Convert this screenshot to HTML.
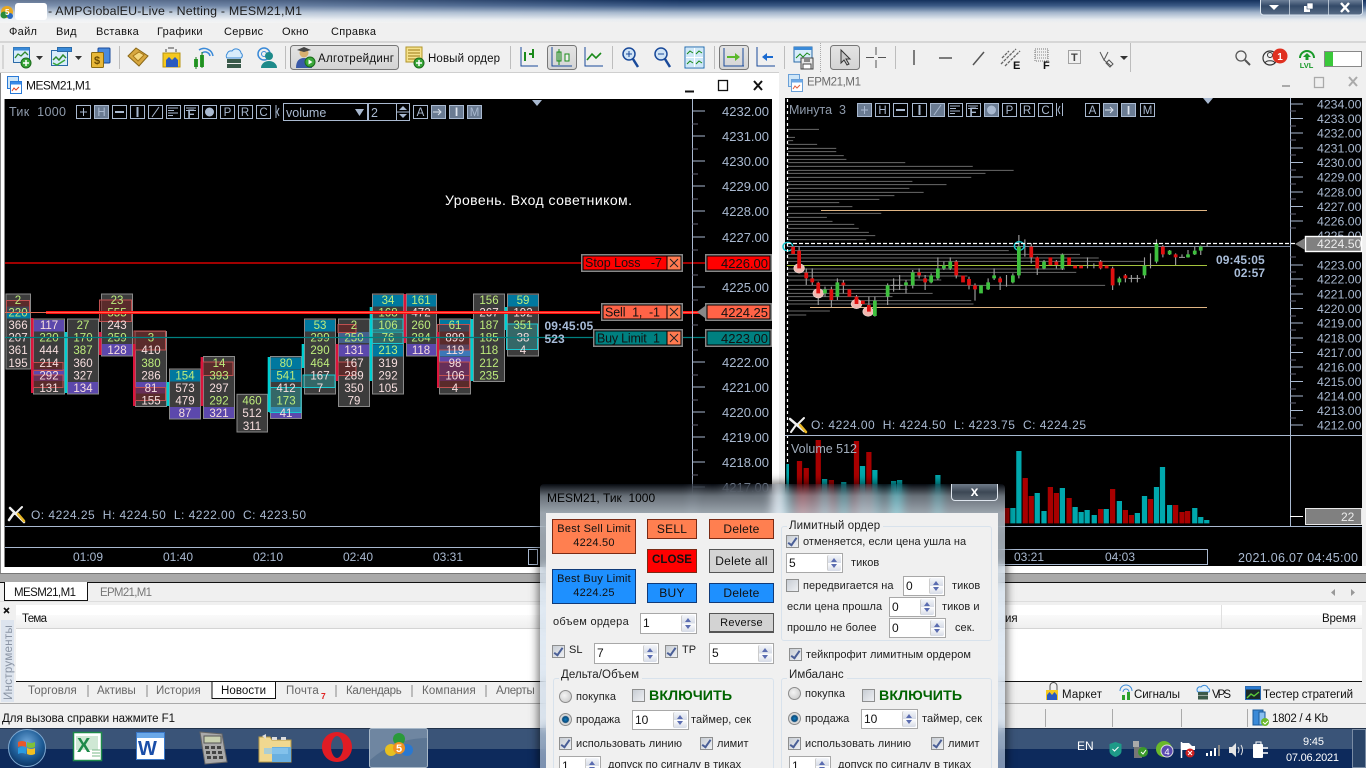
<!DOCTYPE html>
<html lang="ru"><head><meta charset="utf-8"><title>AMPGlobalEU-Live - Netting - MESM21,M1</title>
<style>
html,body{margin:0;padding:0;width:1366px;height:768px;overflow:hidden;background:#f0f0f0}
body{position:relative;font-family:"Liberation Sans","DejaVu Sans",sans-serif;font-size:11px;color:#111}
svg.main{position:absolute;left:0;top:0}
svg text{font-family:"Liberation Sans","DejaVu Sans",sans-serif;white-space:pre}
.m{font-size:11px;fill:#111;letter-spacing:.3px}
.s{font-size:13px;fill:#a9b9d0}
.r{font-size:12.3px;fill:#a9b9d0}
.c{font-size:11.5px;text-anchor:middle}
.g{fill:#bdec7c}.p{fill:#f6dede}
.l{font-size:12px;fill:#a9b9d0}
.bt{font-size:12px;fill:#a9b9d0;text-anchor:middle}
.tab{font-size:11.5px;fill:#666;letter-spacing:.25px}
.dk{font-size:11.5px;fill:#111}
.tray{font-size:12px;fill:#fff}
#dlg{position:absolute;left:540px;top:484px;width:465px;height:284px;backdrop-filter:blur(5px);-webkit-backdrop-filter:blur(5px);background:linear-gradient(180deg,rgba(20,30,50,.3) 0,rgba(190,205,220,.55) 12px,rgba(215,228,240,.72) 29px,rgba(200,215,232,.6) 100%);box-shadow:0 0 9px 2px rgba(0,0,0,.55);border-radius:4px 4px 0 0}
#cl{position:absolute;left:6px;top:29px;width:452px;height:255px;background:#f0f0f0}
#dlg .a{position:absolute;white-space:pre}
.ttl{left:7px;top:7px;font-size:12px;line-height:15px;color:#000}
.x{left:411px;top:0;width:45px;height:16px;border:1px solid #dfe6ee;border-top:none;border-radius:0 0 4px 4px;background:linear-gradient(180deg,rgba(136,150,166,.8),rgba(58,70,84,.85) 50%,rgba(85,96,108,.8));color:#fff;font:bold 14px/15px "Liberation Sans",sans-serif;text-align:center}
.btn{position:absolute;box-sizing:border-box;border:1px solid #7a2a14;text-align:center;font-size:12px;line-height:18px;letter-spacing:.25px;color:#111}
.or{background:#ff7f50}.bl{background:#1e90ff;border-color:#103a78}.gr{background:#d3d3d3;border-color:#555}
.bg2{font-size:11px;line-height:13.5px;padding-top:3px}
.t{position:absolute;white-space:nowrap;font-size:11px;line-height:14px;letter-spacing:.05px;color:#222}
.in{position:absolute;box-sizing:border-box;border:1px solid #a8a8a8;background:#fff;font-size:12px;line-height:18px;padding-left:2px;color:#111}
.sp{position:absolute;right:1px;top:1px;bottom:1px;width:13px;background:linear-gradient(180deg,#f4f6fa 0,#d6dbe6 49%,#fff 50%,#d6dbe6 100%);border-left:1px solid #ccc;border-radius:2px}
.sp:before,.sp:after{content:"";position:absolute;left:3px;border-left:3.5px solid transparent;border-right:3.5px solid transparent}
.sp:before{top:3px;border-bottom:4px solid #5a6cb0}.sp:after{bottom:3px;border-top:4px solid #5a6cb0}
.cb{position:absolute;box-sizing:border-box;width:13px;height:13px;border:1px solid #8e8f8f;background:linear-gradient(135deg,#c8cdd4,#eef0f3)}
.ck:after{content:"";position:absolute;left:3px;top:0;width:3px;height:8px;border-right:2px solid #4a5f97;border-bottom:2px solid #4a5f97;transform:rotate(35deg)}
.ra{position:absolute;box-sizing:border-box;width:13px;height:13px;border-radius:50%;border:1px solid #8b8b8b;background:radial-gradient(circle at 40% 40%,#f4f4f4,#c4c4c4)}
.on{background:radial-gradient(circle,#0f7cc0 0,#0a4a7a 3px,#d8d8d8 4px)}
.fs{position:absolute;box-sizing:border-box;border:1px solid #d8e2ec;border-radius:3px}
.lg{position:absolute;background:#f0f0f0;padding:0 3px 0 2px;font-size:11.5px;line-height:14px;letter-spacing:.1px;color:#222}
.on2{position:absolute;font-weight:bold;font-size:14.2px;line-height:16px;color:#006400;letter-spacing:.1px}
</style></head><body>
<svg class="main" width="1366" height="768" viewBox="0 0 1366 768" xmlns="http://www.w3.org/2000/svg">
<defs>
<linearGradient id="tb" x1="0" y1="0" x2="0" y2="1"><stop offset="0" stop-color="#14305c"/><stop offset=".25" stop-color="#3c5a86"/><stop offset=".55" stop-color="#a4b6cc"/><stop offset=".85" stop-color="#e6ebf0"/><stop offset="1" stop-color="#f0f0f0"/></linearGradient>
<linearGradient id="tb2" x1="0" y1="0" x2="1" y2="0"><stop offset="0" stop-color="#fff" stop-opacity=".35"/><stop offset=".18" stop-color="#fff" stop-opacity=".25"/><stop offset=".5" stop-color="#fff" stop-opacity="0"/></linearGradient>
<linearGradient id="act" x1="0" y1="0" x2="0" y2="1"><stop offset="0" stop-color="#e4e4e4"/><stop offset="1" stop-color="#d4d4d4"/></linearGradient>
<linearGradient id="hd" x1="0" y1="0" x2="0" y2="1"><stop offset="0" stop-color="#fafafa"/><stop offset="1" stop-color="#eeeeee"/></linearGradient>
<linearGradient id="wctl" x1="0" y1="0" x2="0" y2="1"><stop offset="0" stop-color="#8a9ab0"/><stop offset=".5" stop-color="#334a68"/><stop offset="1" stop-color="#5a6e88"/></linearGradient>
<radialGradient id="orb" cx=".5" cy=".35" r=".7"><stop offset="0" stop-color="#6ea6d8"/><stop offset=".6" stop-color="#1c5a94"/><stop offset="1" stop-color="#0a2c58"/></radialGradient>
</defs>
<!-- title bar -->
<rect width="1366" height="23" fill="url(#tb)"/><rect width="1366" height="23" fill="url(#tb2)"/>
<circle cx="7" cy="12" r="6" fill="#e8a820"/><circle cx="4" cy="15" r="3.5" fill="#2a8a3a"/><circle cx="10" cy="16" r="3" fill="#2a6ac0"/><text x="5" y="15" font-size="8" fill="#fff" font-weight="bold">5</text>
<rect x="15" y="3" width="32" height="17" rx="3" fill="#fff"/>
<text x="48" y="15" font-size="12.4" fill="#1c1c1c" textLength="254">- AMPGlobalEU-Live - Netting - MESM21,M1</text>
<g transform="translate(1260,0)"><rect x=".5" y="-3" width="102" height="18" rx="3" fill="url(#wctl)" stroke="#dce6f0"/><path d="M29.5 0V15M68.5 0V15" stroke="#dce6f0" stroke-width=".7"/>
<path d="M9 5h10l-5 5z" fill="#fff"/><rect x="44" y="6" width="6" height="6" fill="#fff"/><rect x="47" y="3" width="6" height="6" fill="#fff" stroke="#334a68" stroke-width=".6"/><path d="M81 3l8 9M89 3l-8 9" stroke="#fff" stroke-width="2.4"/></g>
<!-- menu -->
<rect y="23" width="1366" height="19" fill="#f0f0f0"/>
<text class="m" x="9" y="35">Файл</text><text class="m" x="56" y="35">Вид</text><text class="m" x="96" y="35">Вставка</text><text class="m" x="157" y="35">Графики</text><text class="m" x="224" y="35">Сервис</text><text class="m" x="282" y="35">Окно</text><text class="m" x="331" y="35">Справка</text>
<!-- toolbar -->
<rect y="42" width="1366" height="31" fill="#f0f0f0"/>
<path d="M0 42H1366" stroke="#bbb"/><path d="M0 72.5H779" stroke="#cfcfcf"/>
<path d="M3 45V69M119.5 46V69M285.5 46V69M510.5 46V69M612.5 46V69M714.5 46V69M784.5 46V69M895.5 46V69M1130.5 43V72" stroke="#bdbdbd" stroke-width="1"/><path d="M820.5 43V72" stroke="#aaa" stroke-dasharray="1 1"/>
<!-- new chart -->
<g stroke-linejoin="round"><rect x="13.500" y="47.500" width="16" height="15" fill="#d8ecfa" stroke="#2a6aa8"/><rect x="13.500" y="47.500" width="16" height="3" fill="#3a8ad8"/><path d="M15 58l3-4 3 2 4-4 3 3" fill="none" stroke="#2e8a2e" stroke-width="1.300"/><circle cx="26" cy="63" r="5" fill="#3aa83a" stroke="#1a6a1a"/><path d="M26 60v6M23 63h6" stroke="#fff" stroke-width="1.500"/></g>
<path d="M36 56h7l-3.500 4z" fill="#333"/>
<rect x="51.500" y="50.500" width="16" height="15" fill="#d8ecfa" stroke="#2a6aa8"/><rect x="57.500" y="47.500" width="14" height="4" fill="#3a8ad8" stroke="#2a6aa8"/><path d="M53 60l3-3 3 3 4-5 3 3" fill="none" stroke="#2e8a2e" stroke-width="1.500"/><path d="M53 63l4 2 8-5" fill="none" stroke="#3aa83a" stroke-width="1.500"/>
<path d="M75 56h7l-3.500 4z" fill="#333"/>
<rect x="98" y="48" width="12" height="15" rx="1" fill="#4a8adc" stroke="#1a4a9a"/><rect x="91.500" y="52.500" width="12" height="15" rx="1" fill="#e8b838" stroke="#8a6a10"/><text x="94" y="64" font-size="11" font-weight="bold" fill="#6a4a00">$</text>
<path d="M128 56l8-8 12 8-9 10z" fill="#d8a840" stroke="#8a6818"/><path d="M133 56l6-4 5 3-6 6z" fill="#f4d880" stroke="#a87818"/>
<path d="M166 49v3M176 49v3M168 48h6" stroke="#444" fill="none"/><rect x="163" y="53" width="17" height="14" fill="#f4c820" stroke="#b89410"/><path d="M166 67v-7l3-3 3 3 3-3 3 3v7z" fill="#2a5ac0"/>
<path d="M199 50a9 9 0 0 1 14 6M202 53a5 5 0 0 1 8 3" fill="none" stroke="#3a8ad8" stroke-width="1.500"/><rect x="194" y="59" width="4" height="8" fill="#2ca02c"/><rect x="200" y="55" width="4" height="12" fill="#2ca02c"/><path d="M196 57v12M202 52v16" stroke="#1a7a1a"/>
<path d="M227 54a4 4 0 0 1 5-3a5 5 0 0 1 9 2a3 3 0 0 1 0 5h-14a3 3 0 0 1 0-4z" fill="#d8ecfa" stroke="#3a8ad8"/><rect x="227" y="59" width="14" height="4" fill="#3a5a4a"/><rect x="227" y="64" width="14" height="4" fill="#3a5a4a"/>
<circle cx="264" cy="54" r="6" fill="none" stroke="#3a8ad8" stroke-width="1.500"/><circle cx="264" cy="54" r="2.500" fill="none" stroke="#3a8ad8"/><circle cx="269" cy="56" r="4" fill="#1e8a8a"/><path d="M261 68a8 7 0 0 1 16 0z" fill="#1e8a8a"/>
<!-- algotrading -->
<rect x="290.500" y="45.500" width="108" height="24" rx="3" fill="url(#act)" stroke="#777"/>
<circle cx="304" cy="53" r="4.500" fill="#d8b070"/><path d="M297 50l7-3 7 3-7 2z" fill="#444"/><path d="M296 68c0-7 3-10 8-10s8 3 8 10z" fill="#3a5aa8"/><circle cx="310" cy="62" r="5" fill="#3aa83a" stroke="#1a6a1a"/><path d="M308.500 59.500v5l4-2.500z" fill="#fff"/>
<text x="318" y="62" font-size="11.500" fill="#111" textLength="76">Алготрейдинг</text>
<rect x="406" y="47" width="16" height="15" fill="#f6e28c" stroke="#b09428"/><path d="M408 50h12M408 53h12M408 56h12M408 59h8" stroke="#9a7a18"/><circle cx="419" cy="63" r="5" fill="#3aa83a" stroke="#1a6a1a"/><path d="M419 60v6M416 63h6" stroke="#fff" stroke-width="1.500"/>
<text x="428" y="62" font-size="11.500" fill="#111" textLength="72">Новый ордер</text>
<!-- chart type -->
<g fill="none" stroke="#1a4a9a"><path d="M521 47v19h17"/><path d="M525 52v9" stroke="#1a8a1a" stroke-width="2"/><path d="M533 49v9" stroke="#1a8a1a" stroke-width="2"/><path d="M529 54h4" stroke="#1a8a1a" stroke-width="2"/></g>
<rect x="547.500" y="45.500" width="29" height="24" rx="3" fill="url(#act)" stroke="#777"/><g fill="none" stroke="#1a4a9a"><path d="M552 47v19h20"/></g><rect x="557" y="52" width="4" height="9" fill="none" stroke="#1a8a1a"/><path d="M559 49v16" stroke="#1a8a1a"/><rect x="565" y="54" width="4" height="7" fill="#f0f0f0" stroke="#1a8a1a"/>
<g fill="none"><path d="M585 47v19h18" stroke="#1a4a9a"/><path d="M587 60l5-6 4 4 5-5" stroke="#1a8a1a" stroke-width="1.600"/></g>
<g fill="none"><circle cx="629" cy="54" r="6" fill="#d0e4f6" stroke="#1a4a9a" stroke-width="1.500"/><path d="M633 59l5 8" stroke="#1a4a9a" stroke-width="2.500"/><path d="M626 54h6M629 51v6" stroke="#1a4a9a"/><circle cx="661" cy="54" r="6" fill="#d0e4f6" stroke="#1a4a9a" stroke-width="1.500"/><path d="M665 59l5 8" stroke="#1a4a9a" stroke-width="2.500"/><path d="M658 54h6" stroke="#1a4a9a"/></g>
<g><rect x="685" y="47" width="19" height="21" fill="#fff" stroke="#1a6ab0"/><rect x="686" y="48" width="8" height="9" fill="#cfe8f8"/><rect x="695" y="48" width="8" height="9" fill="#cfe8f8"/><rect x="686" y="58" width="8" height="9" fill="#cfe8f8"/><rect x="695" y="58" width="8" height="9" fill="#cfe8f8"/><path d="M687 54l3-3 3 2M696 54l3-3 3 2M687 64l3-3 3 2M696 64l3-3 3 2" stroke="#1a8a1a" fill="none"/></g>
<rect x="719.500" y="45.500" width="29" height="24" rx="3" fill="url(#act)" stroke="#777"/><path d="M724 48v18h20M743 48v18" stroke="#1a4a9a" fill="none"/><path d="M727 56h8v-3l5 4-5 4v-3h-8z" fill="#5ab82a"/>
<path d="M757 47v19h18" stroke="#1a4a9a" fill="none"/><path d="M773 56h-6v-3l-5 4 5 4v-3h6z" fill="#1a6ad0"/>
<rect x="794" y="47" width="18" height="15" fill="#d8ecfa" stroke="#2a6aa8"/><rect x="794" y="47" width="18" height="3" fill="#3a8ad8"/><path d="M796 58l4-4 3 3 4-4 3 2" stroke="#1a8a1a" fill="none"/><rect x="801" y="58" width="12" height="11" fill="#e8e8e8" stroke="#444"/><rect x="804" y="58" width="6" height="4" fill="#888"/><rect x="803" y="64" width="8" height="5" fill="#fff" stroke="#444"/>
<rect x="830.500" y="45.500" width="29" height="24" rx="3" fill="url(#act)" stroke="#777"/><path d="M841 50l0 13 3-3 3 5 2-1-3-5h4z" fill="#c8c8c8" stroke="#333"/>
<path d="M876 47v8M876 60v8M866 57.500h8M878 57.500h8" stroke="#555" fill="none"/>
<path d="M914 50v15" stroke="#555" stroke-width="1.500"/><path d="M939 58h13" stroke="#555" stroke-width="1.500"/><path d="M973 65l11-13" stroke="#555" stroke-width="1.500"/>
<path d="M1001 64l15-15M1005 66l15-15M1002 58l7-7" stroke="#666" stroke-width="1.300" stroke-dasharray="3 1"/><text x="1013" y="69" font-size="11" font-weight="bold" fill="#111">E</text>
<path d="M1035 49h13v12h-13z" fill="none" stroke="#777" stroke-dasharray="1 1"/><path d="M1035 52h13M1035 55h13M1035 58h13" stroke="#888" stroke-dasharray="1 1"/><text x="1043" y="69" font-size="11" font-weight="bold" fill="#111">F</text>
<rect x="1068.500" y="50.500" width="12" height="13" fill="none" stroke="#555" stroke-dasharray="1 1"/><text x="1071" y="61" font-size="11" font-weight="bold" fill="#444">T</text>
<path d="M1100 52l4 8 4-8M1104 60l7 6M1109 60l4 4-3 3-4-4z" fill="none" stroke="#555"/><path d="M1120 56h8l-4 4z" fill="#333"/>
<circle cx="1241" cy="56" r="5" fill="none" stroke="#555" stroke-width="1.300"/><path d="M1245 60l5 5" stroke="#555" stroke-width="2"/>
<circle cx="1270" cy="58" r="7" fill="#f0f0f0" stroke="#333" stroke-width="1.200"/><circle cx="1270" cy="55" r="2.500" fill="none" stroke="#333"/><path d="M1265 63c1-3 9-3 10 0" stroke="#333" fill="none"/><circle cx="1280" cy="56" r="7.500" fill="#e03020"/><text x="1280" y="60" font-size="10" fill="#fff" text-anchor="middle" font-weight="bold">1</text>
<path d="M1300 58a7 7 0 0 1 14 0" fill="none" stroke="#1a9a2a" stroke-width="2"/><path d="M1307 53l4 4h-2.500v3h-3v-3h-2.500z" fill="#1a9a2a"/><text x="1306.500" y="68" font-size="7.500" fill="#1a9a2a" text-anchor="middle" font-weight="bold">LVL</text>
<rect x="1324.500" y="51.500" width="37" height="15" fill="#fff" stroke="#888"/><rect x="1325" y="52" width="8" height="14" fill="#3ac83a"/>
<!-- left chart window -->
<rect y="73" width="779" height="500" fill="#fff"/>
<path d="M.5 73V573" stroke="#888"/><path d="M4.500 99V567" stroke="#888"/>
<rect x="7.500" y="76.500" width="11" height="12" fill="#cfe6f7" stroke="#2a7ad8"/><rect x="10.500" y="81.500" width="11" height="12" fill="#fff" stroke="#2a7ad8"/><rect x="11" y="82" width="10" height="2.500" fill="#3a8ae8"/><path d="M12 91l2-3 2 2 3-3" stroke="#e04020" fill="none"/>
<text x="26" y="89.500" font-size="12" fill="#111" textLength="65">MESM21,M1</text>
<path d="M685 91.500h9" stroke="#111" stroke-width="2"/><rect x="718.500" y="80.500" width="9" height="10" fill="none" stroke="#111" stroke-width="1.300"/><path d="M754 81l8 9M762 81l-8 9" stroke="#111" stroke-width="2"/>
<rect x="5" y="99" width="767" height="468" fill="#000"/>
<!-- right chart window -->
<rect x="779" y="73" width="587" height="500" fill="#f0f0f0"/>
<rect x="788.500" y="74.500" width="11" height="12" fill="#cfe6f7" stroke="#6aa0d8"/><rect x="791.500" y="79.500" width="11" height="12" fill="#fff" stroke="#6aa0d8"/><rect x="792" y="80" width="10" height="2.500" fill="#6aa8e8"/><path d="M793 89l2-3 2 2 3-3" stroke="#e06040" fill="none"/>
<text x="807" y="85.500" font-size="11.500" fill="#6a6a6a" textLength="54">EPM21,M1</text>
<path d="M1282 86h8" stroke="#aaa" stroke-width="2"/><rect x="1314.500" y="77.500" width="9" height="10" fill="none" stroke="#aaa" stroke-width="1.300"/><path d="M1349 77l8 9M1357 77l-8 9" stroke="#aaa" stroke-width="2"/>
<rect x="785" y="98" width="577" height="468" fill="#000"/>
<rect x="779" y="566" width="587" height="7" fill="#fff"/>
<rect x="0" y="574" width="1366" height="8" fill="#a9a9a9"/><path d="M0 573.500H1366" stroke="#777"/>

<!-- left chart toolbar -->
<text x="9" y="116" font-size="12.5" fill="#8f9bac" textLength="57">Тик  1000</text>
<g fill="none" stroke="#a9b9d0"><rect x="76.500" y="105.500" width="14" height="13"/><path d="M83.500 108v8M80 112h7"/>
<rect x="94.500" y="105.500" width="14" height="13" fill="#6a7b92"/><rect x="112.500" y="105.500" width="14" height="13"/><path d="M115 112h9" stroke-width="2"/><rect x="130.500" y="105.500" width="14" height="13"/><path d="M137.500 107v10" stroke-width="2"/><rect x="148.500" y="105.500" width="14" height="13"/><path d="M152 117l7-10"/><rect x="166.500" y="105.500" width="14" height="13"/><path d="M168 108h10M168 110.500h6M168 113h10M168 115.500h5"/><rect x="184.500" y="105.500" width="14" height="13"/><path d="M186 108h10M186 110.500h10"/><rect x="202.500" y="105.500" width="14" height="13"/><circle cx="209.500" cy="112" r="4" fill="#a9b9d0"/><rect x="220.500" y="105.500" width="14" height="13"/><rect x="238.500" y="105.500" width="14" height="13"/><rect x="256.500" y="105.500" width="14" height="13"/><path d="M276 105v13M279 108l-2 4 2 4"/>
<rect x="283.500" y="103.500" width="84" height="17"/><rect x="368.500" y="103.500" width="41" height="17"/><path d="M396.500 104v16M397 112h12"/><rect x="413.500" y="105.500" width="14" height="13"/><rect x="431.500" y="105.500" width="14" height="13" fill="#6a7b92"/><path d="M433 112h8M438 109l3 3-3 3" stroke="#dde4ee"/><rect x="449.500" y="105.500" width="14" height="13" fill="#6a7b92"/><rect x="467.500" y="105.500" width="14" height="13" fill="#6a7b92"/></g>
<g font-size="11.5" fill="#a9b9d0" text-anchor="middle"><text x="101.500" y="116">H</text><text x="191" y="118" font-weight="bold">F</text><text x="227.500" y="116">P</text><text x="245" y="116">R</text><text x="263.500" y="116">C</text><text x="420.500" y="116">A</text><text x="456.500" y="116" font-size="12" fill="#dde4ee" font-weight="bold">I</text><text x="474.500" y="116">M</text></g>
<text x="286" y="117" font-size="12.5" fill="#a9b9d0">volume</text><path d="M355 109h9l-4.500 7z" fill="#a9b9d0"/><text x="371" y="117" font-size="12.5" fill="#a9b9d0">2</text><path d="M399 110h8l-4-4zM399 114h8l-4 4z" fill="#a9b9d0"/>
<path d="M532 100h10l-5 6z" fill="#a9b9d0"/>
<text x="445" y="205" font-size="14" fill="#fff" textLength="187">Уровень. Вход советником.</text>

<!-- footprint -->
<g fill="#3c3c3c" stroke="#8a8a8a"><rect x="6" y="294" width="24.500" height="75"/><rect x="33.500" y="319" width="31" height="75"/><rect x="67.500" y="319" width="31" height="75"/><rect x="101.500" y="294" width="31" height="62"/><rect x="135.500" y="331.500" width="31" height="75"/><rect x="169.500" y="369" width="31" height="50"/><rect x="203.500" y="356.500" width="31" height="62"/><rect x="237" y="394.300" width="30.500" height="37.700"/><rect x="270.500" y="356.500" width="31" height="62"/><rect x="304.500" y="319" width="31" height="75"/><rect x="338.500" y="319" width="31" height="87.500"/><rect x="372.500" y="294" width="31" height="100"/><rect x="406.500" y="294" width="30" height="62"/><rect x="439.500" y="319" width="31" height="75"/><rect x="473.500" y="294" width="31" height="87.500"/><rect x="507.500" y="294" width="31" height="62"/></g>
<!-- teal cells -->
<g fill="#00789f"><rect x="7" y="306.500" width="23" height="12"/><rect x="170" y="370" width="30" height="11.500"/><rect x="271" y="357.500" width="30" height="12"/><rect x="271" y="370" width="30" height="12"/><rect x="305" y="320" width="30" height="11.500"/><rect x="373" y="295" width="30" height="11.500"/><rect x="373" y="344.500" width="30" height="12"/><rect x="407" y="295" width="29" height="11.500"/><rect x="440" y="320" width="30" height="11.500"/><rect x="508" y="295" width="30" height="11.500"/></g>
<g fill="#5c48ac"><rect x="34" y="320" width="30" height="11.500"/><rect x="34" y="369" width="30" height="12"/><rect x="68" y="382" width="30" height="11.500"/><rect x="102" y="344" width="30" height="11.500"/><rect x="136" y="382" width="30" height="11.500"/><rect x="170" y="407" width="30" height="11.500"/><rect x="204" y="407" width="30" height="11"/><rect x="271" y="407" width="30" height="11"/><rect x="339" y="344.500" width="30" height="12"/><rect x="407" y="344" width="29" height="11.500"/><rect x="440" y="357" width="30" height="12"/><rect x="440" y="369" width="30" height="12"/></g>
<rect x="339" y="332" width="30" height="11" fill="#44608c"/><rect x="440" y="344.500" width="30" height="12" fill="#3c78b8"/><rect x="271" y="407" width="30" height="6" fill="#3c78b8"/>
<!-- imbalance boxes -->
<g fill="#6e1f1f" fill-opacity=".6" stroke="#c05050"><rect x="6.500" y="300.500" width="23" height="12"/><rect x="33" y="362.500" width="30" height="8"/><rect x="33" y="375" width="30" height="12.500"/><rect x="99.500" y="300" width="32" height="21.500"/><rect x="134" y="331" width="31.500" height="19"/><rect x="134" y="387.500" width="31.500" height="13"/><rect x="201" y="362" width="32" height="13.500"/><rect x="338" y="324.500" width="18" height="8"/><rect x="338" y="362" width="18" height="13.500"/><rect x="437.500" y="324.500" width="32" height="25.500"/><rect x="437.500" y="362" width="32" height="13.500"/><rect x="437.500" y="375.500" width="32" height="12"/></g>
<g fill="#2aa8a8" fill-opacity=".42" stroke="#18c8d0"><rect x="270" y="387.500" width="31" height="25"/><rect x="303" y="375" width="32" height="12.500"/><rect x="372" y="319" width="31" height="11"/><rect x="372" y="332" width="31" height="11.500"/><rect x="506.500" y="324" width="31" height="25.500"/></g>
<!-- side bars -->
<g fill="#dc143c"><rect x="31" y="318" width="2.500" height="75"/><rect x="99" y="332" width="2.500" height="23"/><rect x="133" y="344" width="2.500" height="62"/><rect x="200.700" y="357" width="2.500" height="49"/><rect x="335.700" y="344" width="2.500" height="37"/><rect x="403.700" y="294" width="2.500" height="49"/><rect x="437" y="332" width="2" height="55"/></g>
<g fill="#00ced1"><rect x="64.700" y="332" width="2.500" height="61"/><rect x="166.700" y="382" width="2.500" height="24"/><rect x="267.700" y="357" width="2.500" height="55"/><rect x="301.700" y="344" width="2.500" height="24"/><rect x="369.700" y="307" width="2.500" height="74"/><rect x="470.700" y="319" width="2.500" height="62"/><rect x="504.700" y="307" width="2.500" height="23"/></g>
<g class="c">
<g class="g"><text x="18" y="304">2</text><text x="18" y="316.500">220</text><text x="49" y="341.600">220</text><text x="83" y="329">27</text><text x="83" y="341.600">170</text><text x="83" y="354.200">387</text><text x="117" y="304">23</text><text x="117" y="316.500">555</text><text x="117" y="341.600">259</text><text x="151" y="341.600">3</text><text x="151" y="366.800">380</text><text x="185" y="379.400">154</text><text x="219" y="366.800">14</text><text x="219" y="379.400">393</text><text x="219" y="404.600">292</text><text x="252" y="404.600">460</text><text x="286" y="366.800">80</text><text x="286" y="379.400">541</text><text x="286" y="404.600">173</text><text x="320" y="329">53</text><text x="320" y="341.600">299</text><text x="320" y="354.200">290</text><text x="320" y="366.800">464</text><text x="354" y="329">2</text><text x="354" y="341.600">250</text><text x="388" y="304">34</text><text x="388" y="316.500">168</text><text x="388" y="329">106</text><text x="388" y="341.600">76</text><text x="388" y="354.200">213</text><text x="421" y="304">161</text><text x="421" y="329">260</text><text x="421" y="341.600">284</text><text x="455" y="329">61</text><text x="489" y="304">156</text><text x="489" y="329">187</text><text x="489" y="341.600">185</text><text x="489" y="354.200">118</text><text x="489" y="366.800">212</text><text x="489" y="379.400">235</text><text x="523" y="304">59</text><text x="523" y="329">351</text></g>
<g class="p"><text x="18" y="329">366</text><text x="18" y="341.600">207</text><text x="18" y="354.200">361</text><text x="18" y="366.800">195</text><text x="49" y="329">117</text><text x="49" y="354.200">444</text><text x="49" y="366.800">214</text><text x="49" y="379.400">292</text><text x="49" y="392">131</text><text x="83" y="366.800">360</text><text x="83" y="379.400">327</text><text x="83" y="392">134</text><text x="117" y="329">243</text><text x="117" y="354.200">128</text><text x="151" y="354.200">410</text><text x="151" y="379.400">286</text><text x="151" y="392">81</text><text x="151" y="404.600">155</text><text x="185" y="392">573</text><text x="185" y="404.600">479</text><text x="185" y="417.200">87</text><text x="219" y="392">297</text><text x="219" y="417.200">321</text><text x="252" y="417.200">512</text><text x="252" y="429.800">311</text><text x="286" y="392">412</text><text x="286" y="417.200">41</text><text x="320" y="379.400">167</text><text x="320" y="392">7</text><text x="354" y="354.200">131</text><text x="354" y="366.800">167</text><text x="354" y="379.400">289</text><text x="354" y="392">350</text><text x="354" y="404.600">79</text><text x="388" y="366.800">319</text><text x="388" y="379.400">292</text><text x="388" y="392">105</text><text x="421" y="316.500">472</text><text x="421" y="354.200">118</text><text x="455" y="341.600">899</text><text x="455" y="354.200">119</text><text x="455" y="366.800">98</text><text x="455" y="379.400">106</text><text x="455" y="392">4</text><text x="489" y="316.500">267</text><text x="523" y="316.500">192</text><text x="523" y="341.600">38</text><text x="523" y="354.200">4</text></g>
</g>
<!-- order lines -->
<path d="M5 263H581M683 263H705" stroke="#f00" stroke-width="1.200"/>
<path d="M5 312.500H46" stroke="#e06a50"/><path d="M46 312.500H600M683 312.500H705" stroke="#ff1010" stroke-width="3"/><path d="M46 312.500H600M683 312.500H705" stroke="#ff7a60" stroke-width=".8"/>
<path d="M5 337.500H593M683 337.500H705" stroke="#008080" stroke-width="1.200"/>
<!-- left scale -->
<path d="M692.500 99V527" stroke="#a9b9d0"/>
<g stroke="#a9b9d0"><path d="M692 111h13M692 136h13M692 161h13M692 186h13M692 211h13M692 237h13M692 287h13M692 362h13M692 387h13M692 412h13M692 437h13M692 462h13M692 487h13"/><path d="M692 124h6M692 149h6M692 174h6M692 199h6M692 224h6M692 250h6M692 275h6M692 300h6M692 325h6M692 350h6M692 375h6M692 400h6M692 425h6M692 450h6M692 475h6" stroke="#667"/></g>
<g class="s"><text x="722" y="116">4232.00</text><text x="722" y="141">4231.00</text><text x="722" y="166">4230.00</text><text x="722" y="191">4229.00</text><text x="722" y="216">4228.00</text><text x="722" y="242">4227.00</text><text x="722" y="292">4225.00</text><text x="722" y="367">4222.00</text><text x="722" y="392">4221.00</text><text x="722" y="417">4220.00</text><text x="722" y="442">4219.00</text><text x="722" y="467">4218.00</text><text x="722" y="492">4217.00</text></g>
<!-- order labels -->
<g stroke-width="1"><rect x="581" y="254" width="102" height="18" fill="#888"/><rect x="582.500" y="255.500" width="99" height="15" fill="#000"/><rect x="583.500" y="256.500" width="83" height="13" fill="#f00"/><rect x="667.500" y="256.500" width="13" height="13" fill="#ff7a50"/><path d="M670 259l8 8M678 259l-8 8" stroke="#222"/>
<rect x="601" y="303" width="82" height="18" fill="#888"/><rect x="602.500" y="304.500" width="79" height="15" fill="#000"/><rect x="603.500" y="305.500" width="63" height="13" fill="#ff6347"/><rect x="667.500" y="305.500" width="13" height="13" fill="#ff7a50"/><path d="M670 308l8 8M678 308l-8 8" stroke="#222"/>
<rect x="593" y="329" width="90" height="18" fill="#888"/><rect x="594.500" y="330.500" width="87" height="15" fill="#000"/><rect x="595.500" y="331.500" width="71" height="13" fill="#008080"/><rect x="667.500" y="331.500" width="13" height="13" fill="#ff7a50"/><path d="M670 334l8 8M678 334l-8 8" stroke="#222"/>
<rect x="705" y="254" width="67" height="18" fill="#888"/><rect x="706.500" y="255.500" width="64" height="15" fill="#000"/><rect x="707.500" y="256.500" width="62" height="13" fill="#f00"/>
<rect x="705" y="303" width="67" height="18" fill="#888"/><rect x="706.500" y="304.500" width="64" height="15" fill="#000"/><rect x="707.500" y="305.500" width="62" height="13" fill="#ff6347"/>
<rect x="705" y="329" width="67" height="18" fill="#888"/><rect x="706.500" y="330.500" width="64" height="15" fill="#000"/><rect x="707.500" y="331.500" width="62" height="13" fill="#008080"/></g>
<path d="M697 312l8-6v12z" fill="#888"/>
<g font-size="12.5" fill="#111"><text x="585" y="267" textLength="77">Stop Loss   -7</text><text x="605" y="316.500" textLength="55">Sell  1,  -1</text><text x="597" y="342.500" textLength="63">Buy Limit  1</text></g>
<g font-size="13" fill="#111"><text x="721" y="268">4226.00</text><text x="721" y="317">4224.25</text><text x="721" y="343">4223.00</text></g>
<g font-size="12" font-weight="bold" fill="#a8bcd8"><text x="544.500" y="330" letter-spacing=".1">09:45:05</text><text x="544.500" y="343" letter-spacing=".1">523</text></g>
<!-- left OHLC -->
<g fill="none" stroke-linecap="round"><path d="M10 508l14 14" stroke="#f0f0f0" stroke-width="2.500"/><path d="M22 507l-7 7" stroke="#f0f0f0" stroke-width="2"/><path d="M14 513l-5 7" stroke="#f0f0f0" stroke-width="2.500"/><path d="M18 514l6 7" stroke="#e8b828" stroke-width="2.500"/></g>
<text class="l" x="31" y="519" textLength="275">O: 4224.25  H: 4224.50  L: 4222.00  C: 4223.50</text>
<path d="M5 526.500H692M5 547.500H540" stroke="#a9b9d0"/>
<rect x="528.500" y="549.500" width="9" height="15" fill="none" stroke="#a9b9d0"/>
<g class="bt"><text x="88" y="561">01:09</text><text x="178" y="561">01:40</text><text x="268" y="561">02:10</text><text x="358" y="561">02:40</text><text x="448" y="561">03:31</text></g>

<!-- RIGHT chart -->
<g stroke="#6a6a6a" transform="translate(780,100) scale(.375,.3333)" stroke-width="3">
<path d="M20 88H104M20 112H40M20 122H35M20 133H99M20 145H150M20 155H150M20 167H170M20 178H177M20 188H334M20 199H514M20 211H623M20 220H548M20 232H510M20 244H353M20 254H444M20 265H345M20 277H383M20 287H305M20 298H265M20 308H158M20 320H193M20 340H270M20 352H125M20 364H140M20 373H198M20 385H210M20 397H237M20 407H254M20 419H230M20 452H610M20 463H800M20 474H850M20 484H970M20 507H760M20 517H790M20 528H500M20 540H430M20 556H867M20 568H340M20 580H407M20 590H300M20 602H510M20 612H516M20 633H133M20 645H70"/>
</g>
<path d="M821 210.500H1207M810 307.500H1207" stroke="#e0b584"/>
<path d="M787 265.500H1207" stroke="#a4c23c"/>
<path d="M787 246.500H1290" stroke="#7d8aa0"/>
<g transform="translate(780,100) scale(.375,.3333)">
<path stroke="#a0a0a0" stroke-width="3" fill="none" d="M51 520V440M70 505V555M86 505V555M102 545V615M120 560V590M137 560V622M153 535V600M169 540V580M204 585V625M237 590V645M253 590V650M287 550V615M303 535V575M319 525V570M295 556H311M311 556H327M336 540V580M354 510V565M371 505V535M387 525V570M403 520V550M421 472V540M437 485V510M454 472V510M470 480V535M504 530V568M520 550V602M555 535V570M571 505V540M587 530V570M604 525V560M621 520V550M637 405V535M653 418V470M670 430V490M686 470V525M704 480V508M737 480V505M753 460V510M820 472V505M837 490V505M855 480V508M887 500V570M905 530V556M921 522V547M937 525V547M929 535H945M953 525V547M945 535H961M972 472V535M988 460V505M1004 418V490M1021 435V472M1039 450V465M1055 460V495M1072 463V472M1064 472H1080M1088 450V473M1106 440V465M1122 437V465M1139 430V440"/>
<g fill="#f2b8b0" stroke="#e8d8d0" stroke-width="2"><circle cx="51" cy="505" r="14"/><circle cx="102" cy="580" r="14"/><circle cx="204" cy="612" r="14"/><circle cx="235" cy="635" r="14"/></g>
<g fill="none" stroke="#19c8d0" stroke-width="4"><circle cx="21" cy="440" r="13"/><circle cx="638" cy="438" r="13"/></g>
<path fill="#e01010" d="M30 440h10v22h-10zM46 452h10v53h-10zM65 518h10v17h-10zM81 535h10v12h-10zM97 548h10v32h-10zM132 568h10v32h-10zM164 548h10v8h-10zM180 568h10v22h-10zM199 590h10v22h-10zM216 602h10v10h-10zM232 615h10v20h-10zM366 517h10v9h-10zM382 535h10v12h-10zM465 485h10v41h-10zM483 527h10v20h-10zM499 537h10v19h-10zM515 556h10v12h-10zM582 535h10v12h-10zM665 440h10v32h-10zM681 472h10v33h-10zM716 472h10v23h-10zM732 485h10v10h-10zM766 472h10v23h-10zM782 497h10v8h-10zM798 497h10v8h-10zM850 485h10v20h-10zM866 497h10v8h-10zM882 505h10v51h-10zM916 526h10v9h-10zM1016 440h10v23h-10zM1050 463h10v9h-10z"/>
<path fill="#3ec03e" d="M115 568h10v12h-10zM148 547h10v43h-10zM248 602h10v46h-10zM282 556h10v34h-10zM331 547h10v9h-10zM349 517h10v39h-10zM398 526h10v21h-10zM416 505h10v30h-10zM432 496h10v9h-10zM449 485h10v20h-10zM531 556h10v24h-10zM550 547h10v21h-10zM566 526h10v9h-10zM616 526h10v21h-10zM632 440h10v86h-10zM699 485h10v20h-10zM748 464h10v41h-10zM900 535h10v12h-10zM967 497h10v29h-10zM999 430h10v55h-10zM1034 452h10v11h-10zM1083 463h10v9h-10zM1101 452h10v11h-10zM1117 440h10v12h-10z"/>
</g>
<path d="M787 243.500H1305" stroke="#fff" stroke-dasharray="4 2" stroke-width="1.200"/>
<path d="M787.500 99V525" stroke="#fff" stroke-dasharray="3 3" stroke-width="1.200"/>
<g font-size="12" font-weight="bold" fill="#a8bcd8"><text x="1216" y="264" letter-spacing=".1">09:45:05</text><text x="1234" y="277" letter-spacing=".1">02:57</text></g>
<!-- right toolbar -->
<text x="789" y="114" font-size="12.500" fill="#8f9bac" textLength="57">Минута  3</text>
<g fill="none" stroke="#a9b9d0"><rect x="857.500" y="103.500" width="14" height="13" fill="#6a7b92"/><path d="M864.500 106v8M861 110h7"/><rect x="875.500" y="103.500" width="14" height="13"/><rect x="893.500" y="103.500" width="14" height="13"/><path d="M896 110h9" stroke-width="2"/><rect x="912.500" y="103.500" width="14" height="13"/><path d="M919.500 105v10" stroke-width="2"/><rect x="930.500" y="103.500" width="14" height="13" fill="#6a7b92"/><path d="M934 115l7-10"/><rect x="948.500" y="103.500" width="14" height="13"/><path d="M950 106h10M950 108.500h6M950 111h10M950 113.500h5"/><rect x="966.500" y="103.500" width="14" height="13"/><path d="M968 106h10M968 108.500h10"/><rect x="984.500" y="103.500" width="14" height="13" fill="#6a7b92"/><circle cx="991.500" cy="110" r="4" fill="#a9b9d0"/><rect x="1002.500" y="103.500" width="14" height="13"/><rect x="1020.500" y="103.500" width="14" height="13"/><rect x="1038.500" y="103.500" width="14" height="13"/><path d="M1056.500 103v13M1062.500 103v13M1060 106l-2 4 2 4"/>
<rect x="1085.500" y="103.500" width="14" height="13"/><rect x="1103.500" y="103.500" width="14" height="13" fill="#6a7b92"/><path d="M1105 110h8M1110 107l3 3-3 3" stroke="#dde4ee"/><rect x="1121.500" y="103.500" width="14" height="13" fill="#6a7b92"/><rect x="1140.500" y="103.500" width="14" height="13"/></g>
<g font-size="11.500" fill="#a9b9d0" text-anchor="middle"><text x="882.500" y="114">H</text><text x="973" y="116" font-weight="bold">F</text><text x="1009.500" y="114">P</text><text x="1027" y="114">R</text><text x="1045.500" y="114">C</text><text x="1092.500" y="114">A</text><text x="1128.500" y="114.500" font-size="12" fill="#dde4ee" font-weight="bold">I</text><text x="1147.500" y="114">M</text></g>
<path d="M1203 98h10l-5 6z" fill="#a9b9d0"/>
<!-- right scale -->
<path d="M1290.500 98V526" stroke="#a9b9d0"/>
<g stroke="#a9b9d0"><path d="M1290 104h13M1290 118.500h13M1290 133h13M1290 148h13M1290 162.500h13M1290 177h13M1290 192h13M1290 206.500h13M1290 221h13M1290 265h13M1290 279h13M1290 294h13M1290 308.500h13M1290 323h13M1290 338h13M1290 352.500h13M1290 367h13M1290 381.500h13M1290 396h13M1290 410.500h13M1290 425h13"/><path d="M1290 111h6M1290 126h6M1290 140h6M1290 155h6M1290 170h6M1290 184h6M1290 199h6M1290 214h6M1290 228h6M1290 257h6M1290 272h6M1290 286h6M1290 301h6M1290 316h6M1290 330h6M1290 345h6M1290 360h6M1290 374h6M1290 389h6M1290 403h6M1290 418h6" stroke="#667"/></g>
<g class="r"><text x="1317" y="108.500">4234.00</text><text x="1317" y="123">4233.00</text><text x="1317" y="137.500">4232.00</text><text x="1317" y="152.500">4231.00</text><text x="1317" y="167">4230.00</text><text x="1317" y="181.500">4229.00</text><text x="1317" y="196.500">4228.00</text><text x="1317" y="211">4227.00</text><text x="1317" y="225.500">4226.00</text><text x="1317" y="240">4225.00</text><text x="1317" y="269.500">4223.00</text><text x="1317" y="283.500">4222.00</text><text x="1317" y="298.500">4221.00</text><text x="1317" y="313">4220.00</text><text x="1317" y="327.500">4219.00</text><text x="1317" y="342.500">4218.00</text><text x="1317" y="357">4217.00</text><text x="1317" y="371.500">4216.00</text><text x="1317" y="386">4215.00</text><text x="1317" y="400.500">4214.00</text><text x="1317" y="415">4213.00</text><text x="1317" y="429.500">4212.00</text></g>
<rect x="1305.500" y="236.500" width="56" height="15" fill="#808080" stroke="#fff" stroke-width="1.400"/><path d="M1295 244l10-6v12z" fill="#808080"/>
<text x="1317" y="248" font-size="12.300" fill="#ececec">4224.50</text>
<g fill="none" stroke-linecap="round"><path d="M790 419l14 12" stroke="#f0f0f0" stroke-width="2.500"/><path d="M804 418l-7 7M796 425l-5 7" stroke="#f0f0f0" stroke-width="2"/><path d="M800 425l6 7" stroke="#e8b828" stroke-width="2.500"/></g>
<text class="l" x="811" y="429" textLength="275">O: 4224.00  H: 4224.50  L: 4223.75  C: 4224.25</text>
<path d="M785 435.500H1362" stroke="#a9b9d0"/>
<!-- volume -->
<g transform="translate(780,400) scale(.375,.3333)">
<path fill="#00a8ad" d="M17 192h7v178h-7zM112 237h14v133h-14zM163 246h14v124h-14zM213 198h14v172h-14zM246 210h14v160h-14zM296 243h14v127h-14zM312 240h14v130h-14zM414 225h14v145h-14zM614 324h14v46h-14zM630 153h14v217h-14zM679 279h14v91h-14zM697 333h14v37h-14zM746 264h14v106h-14zM780 321h14v49h-14zM796 336h14v34h-14zM812 330h14v40h-14zM831 345h14v25h-14zM863 327h14v43h-14zM898 303h14v67h-14zM946 339h14v31h-14zM965 288h14v82h-14zM997 261h14v109h-14zM1013 201h14v169h-14zM1032 315h14v55h-14zM1099 324h14v46h-14zM1115 351h14v19h-14zM1131 360h14v10h-14z"/>
<path fill="#a80000" d="M45 183h14v187h-14zM63 204h14v166h-14zM95 120h14v250h-14zM130 240h14v130h-14zM197 123h14v247h-14zM230 156h14v214h-14zM598 324h14v46h-14zM647 234h14v136h-14zM663 288h14v82h-14zM714 261h14v109h-14zM730 279h14v91h-14zM764 294h14v76h-14zM848 327h14v43h-14zM880 267h14v103h-14zM914 330h14v40h-14zM930 345h14v25h-14zM981 297h14v73h-14zM1048 315h14v55h-14zM1065 336h14v34h-14zM1080 333h14v37h-14z"/>
</g>
<text x="791" y="453" font-size="12.500" fill="#a2aebd" textLength="66">Volume 512</text>
<rect x="1305.500" y="508.500" width="56" height="16" fill="#808080" stroke="#e8e8e8"/><text x="1341" y="521" font-size="12" fill="#ececec">22</text>
<path d="M1290 516.500h13" stroke="#fff"/>
<path d="M785 526.500H1362" stroke="#a9b9d0"/>
<path d="M785 549.500H1207.500V564.500H785" fill="none" stroke="#a9b9d0"/>
<g class="bt"><text x="1029" y="561">03:21</text><text x="1120" y="561">04:03</text></g>
<text x="1238" y="562" font-size="12.500" fill="#a9b9d0" textLength="120">2021.06.07 04:45:00</text>

<!-- chart tabs -->
<rect y="582" width="1366" height="146" fill="#f0f0f0"/>
<path d="M0 582.500H1366" stroke="#111"/>
<path d="M4.500 582V600.500H87.500V582" fill="#fff" stroke="#111"/>
<text x="14" y="596" font-size="11.500" fill="#111" textLength="62">MESM21,M1</text>
<text x="100" y="596" font-size="11.500" fill="#777" textLength="52">EPM21,M1</text>
<path d="M1335 589v7l-4-3.500zM1351 589l4 3.500-4 3.500z" fill="#999"/>
<path d="M0 601.500H1366" stroke="#ddd"/>
<!-- toolbox -->
<path d="M4 608l5 5M9 608l-5 5" stroke="#111" stroke-width="1.600"/>
<rect x="1" y="620" width="13" height="82" fill="#dde4ee"/>
<text transform="translate(12,700) rotate(-90)" font-size="11.500" fill="#8a94a4" letter-spacing=".3">Инструменты</text>
<rect x="16" y="605" width="1346" height="76" fill="#fff"/>
<rect x="16" y="615" width="1346" height="14" fill="url(#hd)"/>
<path d="M16 628.500H1362" stroke="#d4d4d4"/><path d="M1221.500 605V628" stroke="#e0e0e0"/>
<text x="22" y="622" font-size="11.500" fill="#111" textLength="25">Тема</text>
<text x="1322" y="622" font-size="11.500" fill="#111" textLength="34">Время</text>
<text x="1005" y="622" font-size="11.500" fill="#111">ия</text>
<path d="M16 681.500H1362" stroke="#111"/>
<path d="M212 682V698.500H275.500V682" fill="#fff" stroke="#111"/>
<g class="tab"><text x="28" y="694" textLength="49">Торговля</text><text x="97" y="694" textLength="39">Активы</text><text x="156" y="694" textLength="45">История</text><text x="286" y="694" textLength="33">Почта</text><text x="346" y="694" textLength="56">Календарь</text><text x="422" y="694" textLength="54">Компания</text><text x="496" y="694" textLength="39">Алерты</text></g>
<text x="321" y="699" font-size="8.500" fill="#e02020" font-weight="bold">7</text>
<text x="221" y="694" class="dk" textLength="45">Новости</text>
<path d="M88 685v12M147 685v12M336 685v12M412 685v12M486 685v12" stroke="#888"/>
<path d="M1050 690v-4a2.500 2.500 0 0 1 7 0v4" fill="none" stroke="#555"/><rect x="1046" y="690" width="12" height="10" fill="#f4c820"/><path d="M1047 700v-5l2.500-3 2.500 3 2.500-3 2.500 3v5z" fill="#2a5ac0"/>
<path d="M1120 691a6 6 0 0 1 12 0M1123 692a3 3 0 0 1 6 0" fill="none" stroke="#3a8ad8"/><rect x="1122" y="695" width="3" height="5" fill="#2ca02c"/><rect x="1127" y="692" width="3" height="8" fill="#2ca02c"/>
<path d="M1197 690a3 3 0 0 1 4-3a4 4 0 0 1 7 1a2.500 2.500 0 0 1 1 4h-11a2.500 2.500 0 0 1-1-2z" fill="#e0f0fb" stroke="#3a8ad8"/><rect x="1198" y="692" width="10" height="3.500" fill="#3a5a4a"/><rect x="1198" y="696" width="10" height="3.500" fill="#3a5a4a"/>
<rect x="1245.500" y="686.500" width="15" height="13" fill="#1a2a2a" stroke="#2a6ab0"/><rect x="1246" y="687" width="14" height="2.500" fill="#2a7ad0"/><path d="M1247 698l4-4 3 2 5-4" stroke="#5ac83a" stroke-width="1.400" fill="none"/>
<g class="dk"><text x="1062" y="698" textLength="40">Маркет</text><text x="1134" y="698" textLength="46">Сигналы</text><text x="1212" y="698" textLength="19">VPS</text><text x="1263" y="698" textLength="90">Тестер стратегий</text></g>
<!-- status bar -->
<path d="M0 703.500H1366" stroke="#aaa"/>
<text x="2" y="722" font-size="11.500" fill="#111" textLength="173">Для вызова справки нажмите F1</text>
<path d="M1045.500 709v18M1112.500 709v18M1181.500 709v18M1247.500 709v18" stroke="#aaa"/>
<rect x="1253" y="710" width="10" height="15" fill="#3a8ad8" stroke="#1a5a9a"/><rect x="1259" y="712" width="6" height="13" fill="#8ac0f0" stroke="#1a5a9a"/><circle cx="1265" cy="722" r="4" fill="#6ab82a"/><path d="M1263 722l2 2 3-3" stroke="#fff" fill="none"/>
<text x="1272" y="722" font-size="11.500" fill="#111" textLength="56">1802 / 4 Kb</text>
<!-- taskbar -->
<rect y="728" width="1366" height="21" fill="#3a5478"/><rect y="749" width="1366" height="19" fill="#0d2a5c"/><path d="M0 728.500H1366" stroke="#22324a"/>
<circle cx="27" cy="748" r="18.500" fill="url(#orb)" stroke="#7ea8d0"/>
<path d="M18 742q4-2 8 0v5q-4-2-8 0z" fill="#e8582a"/><path d="M27 742q4 2 8 0v5q-4 2-8 0z" fill="#7ec03a"/><path d="M18 748q4-2 8 0v6q-4-2-8 0z" fill="#2a9ae0"/><path d="M27 748q4 2 8 0v6q-4 2-8 0z" fill="#f4c020"/>
<rect x="73.500" y="732.500" width="28" height="28" fill="#fff" stroke="#1e8a4a" stroke-width="1.500"/><path d="M76 736h22v14H76z" fill="#cfe8d4"/><text x="77" y="752" font-size="20" font-weight="bold" fill="#1e8a4a">X</text>
<path d="M92 750h8M92 753h8M92 756h8" stroke="#7ab88a"/>
<rect x="136.500" y="732.500" width="28" height="27" fill="#fff" stroke="#3a78c8"/><rect x="137" y="733" width="27" height="5" fill="#6aa8e8"/><text x="138" y="755" font-size="20" font-weight="bold" fill="#1a4ea8">W</text>
<path d="M200 732l22 2 5 28-22 2z" fill="#aaa" stroke="#666"/><rect x="204" y="736" width="17" height="7" fill="#c8d0b0" stroke="#555"/><g fill="#444"><rect x="205" y="746" width="4" height="3"/><rect x="211" y="746" width="4" height="3"/><rect x="217" y="746" width="4" height="3"/><rect x="206" y="751" width="4" height="3"/><rect x="212" y="751" width="4" height="3"/><rect x="218" y="751" width="4" height="3"/><rect x="207" y="756" width="4" height="3"/><rect x="213" y="756" width="4" height="3"/><rect x="219" y="756" width="4" height="3"/></g>
<path d="M259 737h11l2 3h19v22h-32z" fill="#f0d890" stroke="#b89a48"/><path d="M262 736l4-2v5zM272 737h5v3h-5zM281 737h5v3h-5z" fill="#ddd"/><rect x="272" y="747" width="19" height="15" fill="#6ab0e0"/><path d="M264 748h24v6h-24z" fill="#8ecaf0" opacity=".7"/>
<path d="M337 732c-9 0-15 7-15 15s6 15 15 15 15-7 15-15-6-15-15-15zm0 4c3 0 6 5 6 11s-3 11-6 11-6-5-6-11 3-11 6-11z" fill="#e01c24" fill-rule="evenodd"/>
<rect x="369.500" y="728.500" width="58" height="39" rx="2" fill="#5c7694" stroke="#a8b8c8"/><path d="M370 760q25-22 57-22v-9h-57z" fill="#fff" opacity=".12"/>
<circle cx="399" cy="739" r="6" fill="#2a9a3a"/><circle cx="391" cy="750" r="6" fill="#e8c020"/><circle cx="407" cy="750" r="6" fill="#2a78d0"/><circle cx="399" cy="748" r="6" fill="#f09020"/><text x="399" y="752" font-size="11" fill="#fff" text-anchor="middle" font-weight="bold">5</text>
<text x="1077" y="750" class="tray">EN</text>
<path d="M1115.500 742l6 2v7c0 3-3 5-6 6-3-1-6-3-6-6v-7z" fill="#1e9a88"/><path d="M1112.500 749l2 2 4-4" stroke="#fff" fill="none"/>
<rect x="1133" y="741" width="6" height="6" fill="#aaa"/><rect x="1134" y="747" width="8" height="11" fill="#777"/><circle cx="1143" cy="752" r="5" fill="#3a9a2a"/><path d="M1141 752l2 2 3-4" stroke="#fff" fill="none"/>
<circle cx="1164" cy="749" r="8" fill="#6ab82a"/><circle cx="1167" cy="751" r="6" fill="#5a4ab0" stroke="#ddd"/><text x="1167" y="755" font-size="9.500" fill="#fff" text-anchor="middle">4</text>
<path d="M1181.500 742v16" stroke="#fff" stroke-width="1.500"/><path d="M1182 743h7l3 3h3v4h-13z" fill="#fff"/><circle cx="1190" cy="753" r="4.500" fill="#d02020"/><path d="M1188 751l4 4M1192 751l-4 4" stroke="#fff"/>
<path d="M1206 753h2v3h-2zM1210 751h2v5h-2zM1214 748h2v8h-2z" fill="#fff"/><path d="M1218 745h2v11h-2z" fill="#888"/>
<path d="M1229 747h3l4-4v14l-4-4h-3z" fill="#e4e4e4"/><path d="M1238 747q2 3 0 6M1241 745q3 5 0 10" stroke="#e4e4e4" fill="none"/>
<rect x="1253" y="744" width="10" height="14" rx="1" fill="#fff"/><path d="M1263 748h5M1263 753h5" stroke="#fff" stroke-width="1.500"/><path d="M1261 744v-2h-5v2" stroke="#fff" fill="none"/>
<text x="1303" y="745" font-size="11" fill="#fff" textLength="21">9:45</text>
<text x="1286" y="761" font-size="11" fill="#fff" textLength="53">07.06.2021</text>
<rect x="1352.500" y="729.500" width="13" height="38" fill="#2a4468" stroke="#7a8ca4"/>
</svg>

<div id="dlg">
<div class="a ttl">MESM21, Тик  1000</div>
<div class="a x">x</div>
<div id="cl">
<div class="btn or bg2" style="left:6px;top:6px;width:84px;height:35px">Best Sell Limit<br>4224.50</div>
<div class="btn or" style="left:101px;top:6px;width:50px;height:20px">SELL</div>
<div class="btn or" style="left:163px;top:6px;width:65px;height:20px">Delete</div>
<div class="btn" style="left:101px;top:36px;width:50px;height:24px;background:#f00;font-weight:bold;line-height:21px;letter-spacing:.1px;font-size:11.500px">CLOSE</div>
<div class="btn gr" style="left:163px;top:36px;width:65px;height:24px;line-height:22px">Delete all</div>
<div class="btn bl bg2" style="left:6px;top:56px;width:84px;height:35px">Best Buy Limit<br>4224.25</div>
<div class="btn bl" style="left:101px;top:70px;width:50px;height:20px">BUY</div>
<div class="btn bl" style="left:163px;top:70px;width:65px;height:20px">Delete</div>
<div class="t" style="left:7px;top:102px;letter-spacing:.3px">объем ордера</div>
<div class="in" style="left:94px;top:100px;width:57px;height:21px">1<i class="sp"></i></div>
<div class="btn gr" style="left:163px;top:100px;width:65px;height:20px;font-size:11px;border-width:1px 1px 2px 1px">Reverse</div>
<div class="cb ck" style="left:6px;top:132px"></div><div class="t" style="left:23px;top:130px">SL</div>
<div class="in" style="left:48px;top:130px;width:65px;height:21px">7<i class="sp"></i></div>
<div class="cb ck" style="left:119px;top:132px"></div><div class="t" style="left:136px;top:130px">TP</div>
<div class="in" style="left:163px;top:130px;width:65px;height:21px">5<i class="sp"></i></div>

<div class="fs" style="left:7px;top:165px;width:221px;height:110px"></div>
<div class="lg" style="left:13px;top:155px">Дельта/Объем</div>
<div class="ra" style="left:13px;top:177px"></div><div class="t" style="left:30px;top:177px">покупка</div>
<div class="cb" style="left:86px;top:176px"></div><div class="on2" style="left:103px;top:175px">ВКЛЮЧИТЬ</div>
<div class="ra on" style="left:13px;top:200px"></div><div class="t" style="left:30px;top:200px">продажа</div>
<div class="in" style="left:86px;top:197px;width:57px;height:20px">10<i class="sp"></i></div><div class="t" style="left:145px;top:200px">таймер, сек</div>
<div class="cb ck" style="left:13px;top:224px"></div><div class="t" style="left:30px;top:224px">использовать линию</div>
<div class="cb ck" style="left:154px;top:224px"></div><div class="t" style="left:171px;top:224px">лимит</div>
<div class="in" style="left:13px;top:243px;width:42px;height:20px">1<i class="sp"></i></div><div class="t" style="left:62px;top:245px">допуск по сигналу в тиках</div>

<div class="fs" style="left:235px;top:13px;width:211px;height:115px"></div>
<div class="lg" style="left:241px;top:6px">Лимитный ордер</div>
<div class="cb ck" style="left:240px;top:22px"></div><div class="t" style="left:257px;top:22px">отменяется, если цена ушла на</div>
<div class="in" style="left:240px;top:40px;width:57px;height:20px">5<i class="sp"></i></div><div class="t" style="left:305px;top:43px">тиков</div>
<div class="cb" style="left:240px;top:66px"></div><div class="t" style="left:257px;top:66px">передвигается на</div>
<div class="in" style="left:357px;top:63px;width:42px;height:20px">0<i class="sp"></i></div><div class="t" style="left:406px;top:66px">тиков</div>
<div class="t" style="left:241px;top:87px">если цена прошла</div>
<div class="in" style="left:343px;top:84px;width:47px;height:20px">0<i class="sp"></i></div><div class="t" style="left:396px;top:87px">тиков и</div>
<div class="t" style="left:241px;top:108px">прошло не более</div>
<div class="in" style="left:343px;top:105px;width:57px;height:20px">0<i class="sp"></i></div><div class="t" style="left:409px;top:108px">сек.</div>
<div class="cb ck" style="left:243px;top:135px"></div><div class="t" style="left:260px;top:135px">тейкпрофит лимитным ордером</div>

<div class="fs" style="left:235px;top:165px;width:211px;height:110px"></div>
<div class="lg" style="left:241px;top:155px">Имбаланс</div>
<div class="ra" style="left:242px;top:174px"></div><div class="t" style="left:259px;top:174px">покупка</div>
<div class="cb" style="left:316px;top:176px"></div><div class="on2" style="left:333px;top:175px">ВКЛЮЧИТЬ</div>
<div class="ra on" style="left:242px;top:199px"></div><div class="t" style="left:259px;top:199px">продажа</div>
<div class="in" style="left:315px;top:196px;width:57px;height:20px">10<i class="sp"></i></div><div class="t" style="left:376px;top:199px">таймер, сек</div>
<div class="cb ck" style="left:242px;top:224px"></div><div class="t" style="left:259px;top:224px">использовать линию</div>
<div class="cb ck" style="left:385px;top:224px"></div><div class="t" style="left:402px;top:224px">лимит</div>
<div class="in" style="left:243px;top:243px;width:42px;height:20px">1<i class="sp"></i></div><div class="t" style="left:292px;top:245px">допуск по сигналу в тиках</div>
</div>
</div>
</body></html>
